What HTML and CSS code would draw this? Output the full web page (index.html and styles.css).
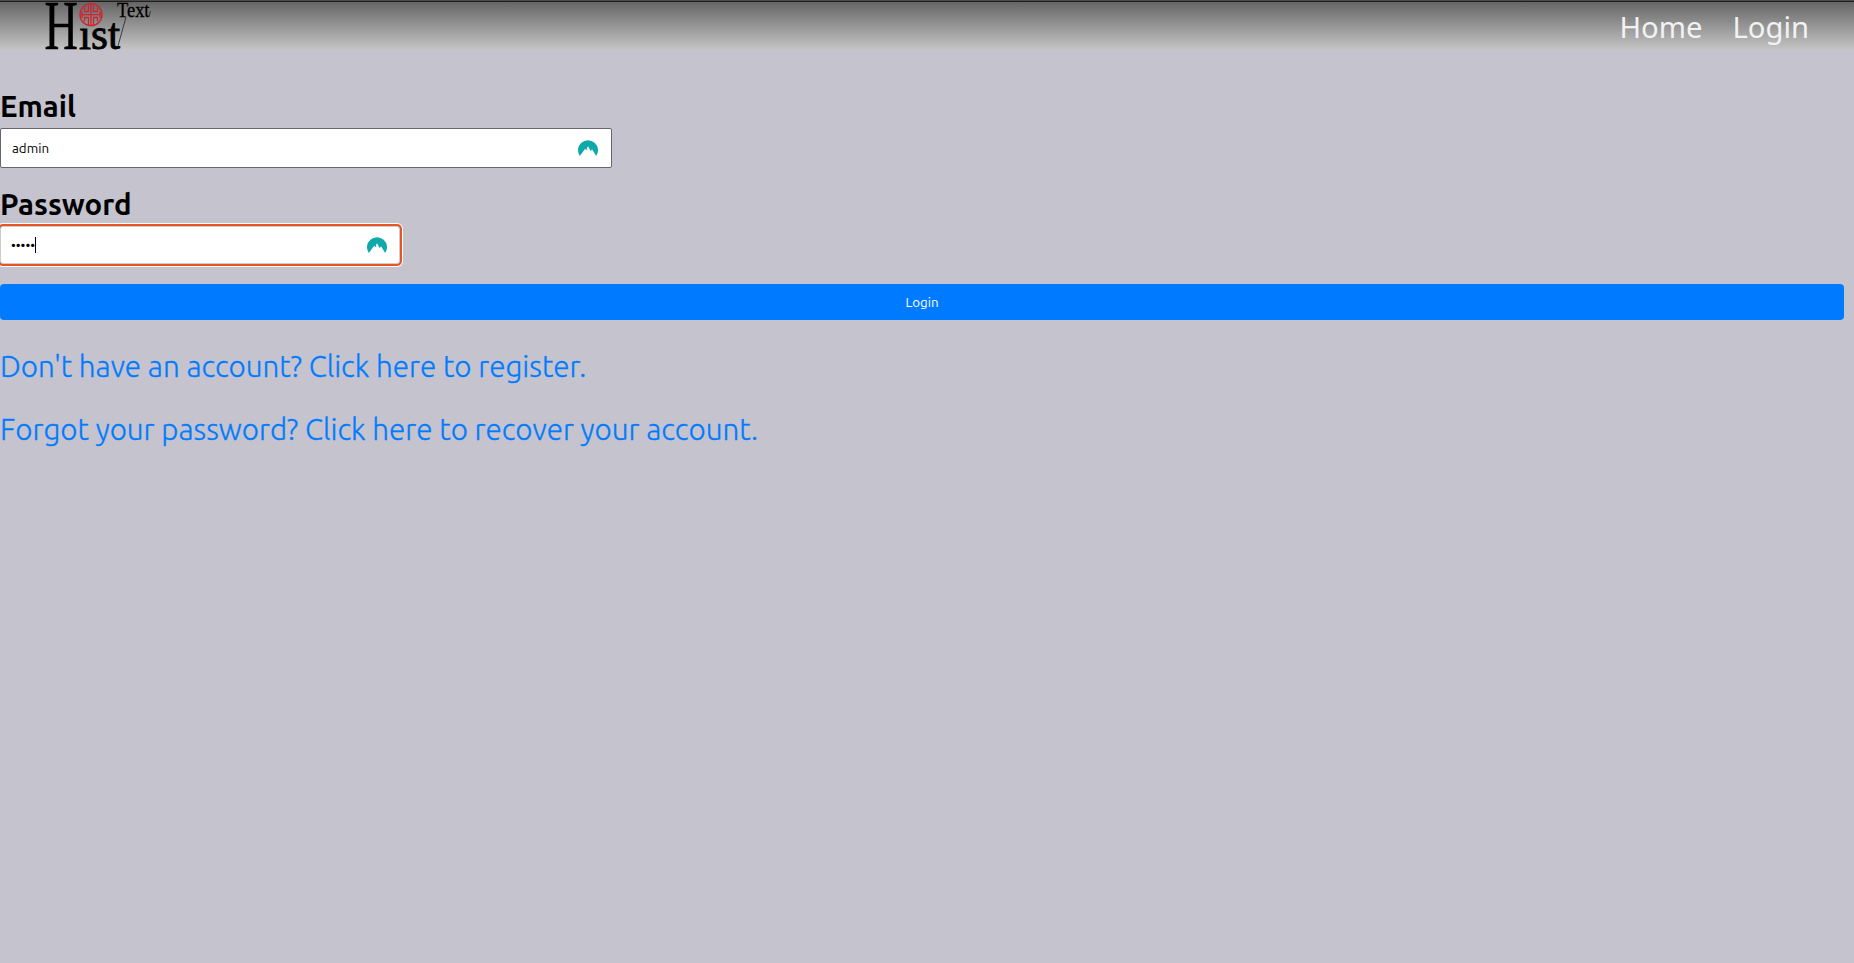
FILE: index.html
```html
<!DOCTYPE html>
<html lang="en">
<head>
<meta charset="utf-8">
<title>HistText</title>
<link rel="stylesheet" href="styles.css">
</head>
<body>
<header class="navbar">
  <a class="brand" aria-label="HistText">
    <svg class="logo" width="112" height="48" viewBox="42 2 112 48">
      <g class="logo-text">
        <text class="heavy" x="44.500" y="48.7" font-size="69" textLength="33.500" lengthAdjust="spacingAndGlyphs">H</text>
        <text class="heavy ist" x="79" y="48.7" font-size="45" textLength="41" lengthAdjust="spacingAndGlyphs">ıst</text>
        <text class="small" x="117" y="17" font-size="20.5" textLength="32.500" lengthAdjust="spacingAndGlyphs">Text</text>
      </g>
      <g class="seal">
        <circle cx="91" cy="14.7" r="11"/>
        <path d="M91 4v21.500M88.500 5v6.500h-4v-4M93.500 5v6.500h4v-4M81 14.700h20M82 11.500v6.500M100 11.500v6.500M88.500 25v-7.500h-4v4M93.500 25v-7.500h4v4"/>
      </g>
      <path class="slash" d="M126 17 118 46M150.500 11l-1.500 5"/>
    </svg>
  </a>
  <nav class="links"><a>Home</a><a>Login</a></nav>
</header>
<main class="form">
  <label class="label">Email</label>
  <div class="field email"><span class="value">admin</span>
    <svg class="nord" width="20" height="16" viewBox="0 0 20 16"><path d="M1.8 16A10 10 0 1 1 18.2 16L14 9.2l-1.2 2L10 6.2 8.800 8.500l.8 1.800L7 9z"/></svg>
  </div>
  <label class="label second">Password</label>
  <div class="field password"><span class="value dots">•••••</span><span class="caret"></span>
    <svg class="nord" width="20" height="16" viewBox="0 0 20 16"><path d="M1.8 16A10 10 0 1 1 18.2 16L14 9.2l-1.2 2L10 6.2 8.800 8.500l.8 1.800L7 9z"/></svg>
  </div>
  <button class="submit">Login</button>
  <a class="help register">Don't have an account? Click here to register.</a>
  <a class="help recover">Forgot your password? Click here to recover your account.</a>
</main>
</body>
</html>
```
FILE: styles.css
```css
* { box-sizing: border-box; }
body { margin: 0; min-height: 963px; background: #c5c3ce; font-family: Ubuntu, "Noto Sans", sans-serif; color: #000; }
.navbar { display: flex; justify-content: space-between; align-items: center; height: 50px; padding: 2px 45px 0 42px; background: linear-gradient(#4a4a4a 0 1px, #202020 1px 2px, #666 2px, #c5c5c5 50px); }
.brand, .logo { display: block; }
.logo { overflow: visible; }
.logo-text { font-family: "Liberation Serif", serif; }
.heavy { stroke: #000; stroke-width: .5; }
.ist { stroke-width: .9; }
.small { stroke: #000; stroke-width: .3; }
.seal { fill: none; stroke: #d0232f; stroke-width: 1.3; }
.slash { fill: none; stroke: #222; stroke-width: .8; }
.links { display: flex; gap: 30px; padding-top: 3px; font: 29.2px/47px "Noto Sans", sans-serif; color: #f2f2f2; }
.form { display: flex; flex-direction: column; align-items: flex-start; padding: 35px 10px 0 0; }
.label { height: 43px; font-size: 29.4px; line-height: 44px; font-weight: 600; }
.second { margin-top: 15px; height: 42px; }
.field { display: flex; align-items: center; height: 40px; background: #fff; font-size: 13.33px; }
.email { width: 612px; padding: 0 13px 0 11px; border: 1px solid #686374; border-radius: 2px; }
.password { width: 400px; height: 38px; margin-top: 1px; padding: 0 12px 0 10px; border: 1px solid #ccc; border-radius: 3px; box-shadow: 0 0 0 2px #e95420, 0 0 0 3px #fff; }
.nord { margin-left: auto; fill: #0fa9ab; }
.caret { width: 1px; height: 16px; background: #000; }
.submit { width: 100%; height: 36px; margin-top: 20px; border: 0; border-radius: 4px; background: #007bff; color: #fff; font: 13.33px Ubuntu, "Noto Sans", sans-serif; }
.help { color: #007bff; font-size: 29.65px; line-height: 42px; font-weight: 300; white-space: nowrap; -webkit-text-stroke: .3px #007bff; }
.register { margin-top: 25px; }
.recover { margin-top: 21px; }
```
